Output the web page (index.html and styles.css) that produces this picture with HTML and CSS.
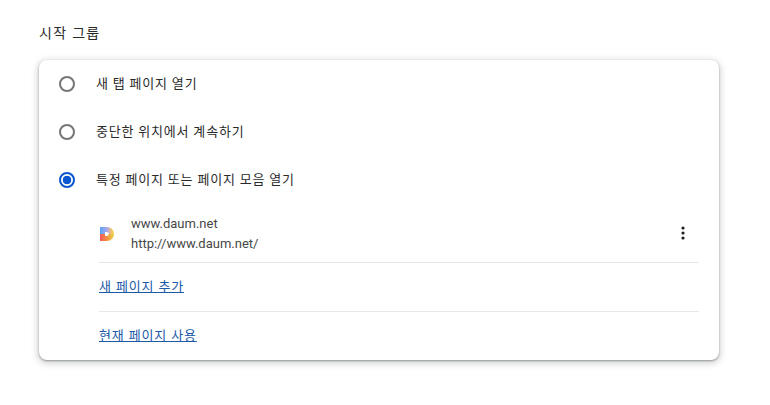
FILE: index.html
```html
<!DOCTYPE html>
<html lang="ko">
<head>
<meta charset="utf-8">
<title>시작 그룹</title>
<link rel="stylesheet" href="styles.css">
</head>
<body>
<main class="page">
  <h2 class="title">시작 그룹</h2>
  <section class="card">
    <div class="option"><span class="radio"></span><span class="label">새 탭 페이지 열기</span></div>
    <div class="option"><span class="radio"></span><span class="label">중단한 위치에서 계속하기</span></div>
    <div class="option"><span class="radio checked"></span><span class="label">특정 페이지 또는 페이지 모음 열기</span></div>
    <div class="pages">
      <div class="site">
        <svg class="favicon" viewBox="0 0 16 16" width="16" height="16" aria-hidden="true">
          <defs>
            <linearGradient id="top" x1="0" y1="0" x2="1" y2="0">
              <stop offset="0" stop-color="#5aa5f5"/>
              <stop offset="0.5" stop-color="#a9a6ee"/>
              <stop offset="0.8" stop-color="#f2c070"/>
              <stop offset="1" stop-color="#f6d340"/>
            </linearGradient>
            <linearGradient id="bottom" x1="0" y1="0" x2="1" y2="0">
              <stop offset="0" stop-color="#ef5a5f"/>
              <stop offset="0.5" stop-color="#f59040"/>
              <stop offset="1" stop-color="#e6d84a"/>
            </linearGradient>
          </defs>
          <path fill="url(#top)" d="M1 1H7.5C12 1 15 3.9 15 8H9.8C9.8 6.7 8.9 6 7.6 6H6V8H1Z"/>
          <path fill="url(#bottom)" d="M1 8H6V10H7.6C8.9 10 9.8 9.3 9.8 8H15C15 12.1 12 15 7.5 15H1Z"/>
        </svg>
        <div class="site-text">
          <div class="site-name">www.daum.net</div>
          <div class="site-url">http://www.daum.net/</div>
        </div>
        <svg class="more" viewBox="0 0 4 14" width="4" height="14" aria-hidden="true">
          <circle cx="2" cy="2" r="1.6"/><circle cx="2" cy="7" r="1.6"/><circle cx="2" cy="12" r="1.6"/>
        </svg>
      </div>
      <div class="link-row"><a class="link" href="#">새 페이지 추가</a></div>
      <div class="link-row"><a class="link" href="#">현재 페이지 사용</a></div>
    </div>
  </section>
</main>
</body>
</html>
```
FILE: styles.css
```css
* { box-sizing: border-box; }
html, body { margin: 0; background: #fff; }
body {
  font-family: Roboto, "Noto Sans CJK KR", sans-serif;
  font-size: 13px;
  color: #2a2a2a;
}
.page { width: 770px; height: 405px; padding: 24px 51px 0 39px; overflow: hidden; }
.title {
  margin: 0 0 17px;
  height: 19px;
  line-height: 19px;
  font-size: 14px;
  font-weight: 400;
  letter-spacing: 1.3px;
}
.card {
  height: 300px;
  border-radius: 8px;
  background: #fff;
  box-shadow: 0 1px 2px rgba(60,64,67,.45), 0 2px 6px 2px rgba(60,64,67,.2);
}
.option { height: 48px; display: flex; align-items: center; padding-left: 20px; }
.radio {
  width: 16px; height: 16px;
  border: 2px solid #747775;
  border-radius: 50%;
  margin-right: 21px;
  flex: none;
}
.radio.checked {
  border-color: #0b57d0;
  background: radial-gradient(circle, #0b57d0 0 4px, #fff 4.6px);
}
.label { line-height: 18px; letter-spacing: .8px; }
.pages { padding: 0 20px 0 60px; }
.site {
  height: 59px;
  display: flex;
  align-items: center;
  border-bottom: 1px solid #e8e8e8;
}
.favicon { flex: none; margin-right: 16px; margin-top: 1px; }
.site-text { flex: 1; color: #474747; line-height: 20px; font-size: 13px; padding-top: 1px; }
.more { flex: none; fill: #1f1f1f; margin-right: 14px; margin-bottom: 1px; }
.link-row { height: 49px; display: flex; align-items: center; border-bottom: 1px solid #e8e8e8; }
.link-row:last-child { height: 48px; border-bottom: 0; }
.link { color: #1a5aa8; font-size: 13px; line-height: 18px; letter-spacing: .85px; }
```
